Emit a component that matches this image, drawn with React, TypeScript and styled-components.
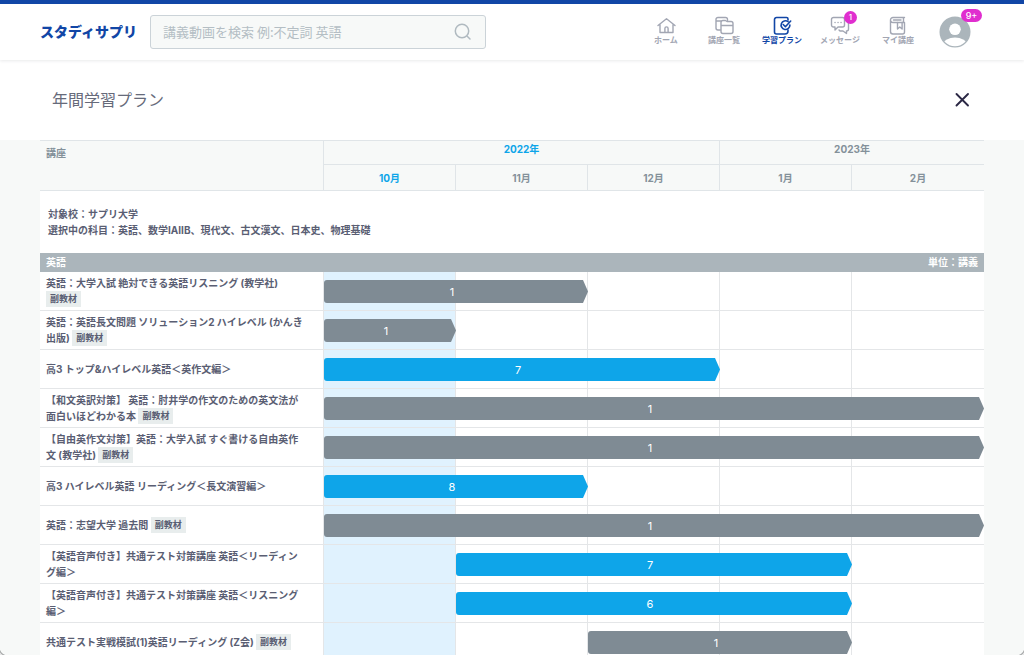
import React from 'react';
import styled, { createGlobalStyle, css } from 'styled-components';

const color = {
  brand: '#1146a6',
  sky: '#0ea5e9',
  skyPale: '#e0f2fe',
  slate: '#7f8b94',
  mist: '#abb5bb',
  canvas: '#f7f9f8',
  line: '#e0e5e8',
  grid: '#e4e6e8',
  text: '#5a5e73',
  muted: '#84919a',
  icon: '#a2a6b3',
  pink: '#e02ecf',
};

const GlobalStyle = createGlobalStyle`
  *, *::before, *::after { box-sizing: border-box; }
  body {
    margin: 0;
    background: ${color.canvas};
    color: ${color.text};
    font-family: Inter, "Noto Sans CJK JP", sans-serif;
  }
  button, input { font: inherit; }
`;

const Shell = styled.div`
  height: 100vh;
  overflow: hidden;
  display: flex;
  flex-direction: column;
`;

const WindowCorner = styled.span<{ $side: 'left' | 'right' }>`
  position: fixed;
  bottom: 0;
  ${({ $side }) => $side}: 0;
  width: 8px;
  height: 8px;
  background: radial-gradient(
    circle at ${({ $side }) => ($side === 'left' ? '100%' : '0%')} 0%,
    transparent 8px, #9b9d9e 9px, #e6e7e7 10px
  );
`;

const Header = styled.header`
  flex: none;
  display: flex;
  align-items: center;
  height: 60px;
  padding: 0 53px 0 40px;
  border-top: 4px solid ${color.brand};
  background: #fff;
  box-shadow: 0 1px 3px rgba(40, 50, 60, 0.1);
  position: relative;
  z-index: 3;
`;

const Logo = styled.a`
  flex: none;
  width: 110px;
  color: ${color.brand};
  font-size: 14px;
  font-weight: 900;
  line-height: 24px;
  white-space: nowrap;
  text-decoration: none;
`;

const SearchForm = styled.form`
  display: flex;
  align-items: center;
  flex: 0 1 336px;
  height: 34px;
  padding: 0 12px;
  border: 1px solid #cbd3d8;
  border-radius: 3px;
  background: ${color.canvas};
`;

const SearchInput = styled.input`
  flex: 1;
  min-width: 0;
  padding: 0;
  border: 0;
  outline: 0;
  background: none;
  font-family: "Noto Sans CJK JP", sans-serif;
  font-size: 13px;
  line-height: 20px;
  color: ${color.text};
  &::placeholder { color: #b4bec4; opacity: 1; }
`;

const IconButton = styled.button`
  display: flex;
  padding: 0;
  border: 0;
  background: none;
  color: inherit;
  cursor: pointer;
`;

const SearchButton = styled(IconButton)`
  color: #b0bac0;
`;

const Nav = styled.nav`
  display: flex;
  align-self: flex-start;
  margin-left: auto;
  padding-top: 12px;
`;

const NavItem = styled.a<{ $active?: boolean }>`
  position: relative;
  display: flex;
  flex-direction: column;
  align-items: center;
  width: 58px;
  color: ${({ $active }) => ($active ? color.brand : color.icon)};
  font-size: 8px;
  font-weight: 700;
  line-height: 8px;
  white-space: nowrap;
  text-decoration: none;
`;

const Strokes = styled.svg<{ $weight?: number }>`
  display: block;
  fill: none;
  stroke: currentColor;
  stroke-width: ${({ $weight = 1.4 }) => $weight};
  stroke-linecap: round;
  stroke-linejoin: round;
`;

const Badge = styled.span<{ $wide?: boolean }>`
  position: absolute;
  height: 13px;
  border-radius: 7px;
  background: ${color.pink};
  color: #fff;
  font-weight: 500;
  line-height: 13px;
  text-align: center;
  ${({ $wide }) =>
    $wide
      ? css`top: -7px; left: 22px; width: 21px; font-size: 9px;`
      : css`top: -5px; left: 33px; width: 13px; font-size: 8px;`}
`;

const Account = styled(IconButton)`
  position: relative;
  margin-left: 12px;
`;

const TitleBar = styled.div`
  flex: none;
  display: flex;
  align-items: center;
  justify-content: space-between;
  height: 80px;
  padding: 0 54px 0 52px;
  background: #fff;
`;

const Title = styled.h1`
  margin: 0;
  color: #666a7a;
  font-size: 16px;
  font-weight: 400;
  line-height: 24px;
`;

const CloseButton = styled(IconButton)`
  color: #2b2845;
`;

const Content = styled.main`
  flex: 1;
  min-height: 0;
  overflow: hidden;
  padding: 0 40px;
`;

const Schedule = styled.table`
  width: 100%;
  table-layout: fixed;
  border-collapse: separate;
  border-spacing: 0;
  background: #fff;
  font-size: 10px;
  font-weight: 700;
  line-height: 16px;
`;

const CourseCol = styled.col`
  width: 284px;
`;

const HeadCell = styled.th<{ $current?: boolean; $kind: 'course' | 'year' | 'month' }>`
  padding: 0;
  border-bottom: 1px solid ${color.line};
  background: ${color.canvas};
  color: ${({ $current }) => ($current ? color.sky : color.muted)};
  &:not(:last-child) { border-right: 1px solid ${color.line}; }
  ${({ $kind }) =>
    $kind === 'course' &&
    css`
      padding: 4px 6px;
      border-top: 1px solid ${color.line};
      border-right: 1px solid ${color.line};
      text-align: left;
      vertical-align: top;
    `}
  ${({ $kind }) =>
    $kind === 'year' &&
    css`
      height: 25px;
      border-top: 1px solid ${color.line};
      vertical-align: top;
    `}
  ${({ $kind }) => $kind === 'month' && css`height: 26px;`}
`;

const InfoCell = styled.td`
  padding: 15px 8px;
`;

const InfoLine = styled.p`
  margin: 0;
`;

const SubjectCell = styled.th<{ $end?: boolean }>`
  height: 19px;
  padding: 1px 6px 2px;
  background: ${color.mist};
  color: #fff;
  text-align: ${({ $end }) => ($end ? 'right' : 'left')};
`;

const CourseCell = styled.th`
  height: 39px;
  padding: 3px 17px 3px 6px;
  border-right: 1px solid ${color.grid};
  border-bottom: 1px solid ${color.grid};
  text-align: left;
  vertical-align: middle;
`;

const Tag = styled.span`
  display: inline-block;
  padding: 0 4px;
  background: #e8eded;
  font-size: 9px;
  line-height: 16px;
  vertical-align: top;
`;

const MonthCell = styled.td<{ $current?: boolean }>`
  position: relative;
  height: 39px;
  padding: 0;
  border-bottom: 1px solid ${color.grid};
  background: ${({ $current }) => ($current ? color.skyPale : 'transparent')};
  &:not(:last-child) { border-right: 1px solid ${color.grid}; }
`;

const Bar = styled.span<{ $months: number; $extra?: boolean }>`
  position: absolute;
  z-index: 1;
  top: 8px;
  left: 0;
  display: flex;
  align-items: center;
  justify-content: center;
  width: calc(${({ $months }) => $months * 100}% + ${({ $months }) => $months}px);
  height: 23px;
  padding-right: 8px;
  border-radius: 3px 0 0 3px;
  background: ${({ $extra }) => ($extra ? color.slate : color.sky)};
  clip-path: polygon(0 0, calc(100% - 5px) 0, 100% 50%, calc(100% - 5px) 100%, 0 100%);
  color: #fff;
  font-size: 11px;
  font-weight: 400;
`;

const HomeIcon = () => (
  <Strokes width="20" height="20" viewBox="0 0 20 20" aria-hidden="true">
    <path d="M2 9.500 10.500 2.700 19 9.500M4 8.500v8h13v-8M8.900 16.500v-4a1.600 1.600 0 0 1 3.200 0v4" />
  </Strokes>
);

const CoursesIcon = () => (
  <Strokes width="20" height="20" viewBox="0 0 20 20" aria-hidden="true">
    <path d="M6.500 14H4a2 2 0 0 1-2-2V3.500a2 2 0 0 1 2-2h7.500a2 2 0 0 1 2 2v1M2 5h5" />
    <path d="M9 4.500h2.500l1.500 1h4a2 2 0 0 1 2 2V15.500a2 2 0 0 1-2 2H9a2 2 0 0 1-2-2V6.500a2 2 0 0 1 2-2zM7 9.500h12" />
  </Strokes>
);

const PlanIcon = () => (
  <Strokes width="20" height="20" viewBox="0 0 20 20" aria-hidden="true" $weight={1.6}>
    <path d="M16 4V3a1.500 1.500 0 0 0-1.500-1.500h-10a2 2 0 0 0-2 2V16a2 2 0 0 0 2 2H13a3 3 0 0 0 3-3v-1" />
    <path d="M16 5.500A4.400 4.400 0 1 0 17.900 9M11.200 8.500l2.200 2.200L18.700 5" />
  </Strokes>
);

const MessageIcon = () => (
  <Strokes width="20" height="20" viewBox="0 0 20 20" aria-hidden="true">
    <path d="M3.500 1.500h9a2 2 0 0 1 2 2V9a2 2 0 0 1-2 2H8l-3 3v-3H3.500a2 2 0 0 1-2-2V3.500a2 2 0 0 1 2-2z" />
    <path d="M17 5.500a2 2 0 0 1 1.500 2V13a2 2 0 0 1-2 2v2.500L13 15h-3l-1-1" />
    <path d="M5 6.500h.1M8 6.500h.1M11 6.500h.1" />
  </Strokes>
);

const MyCoursesIcon = () => (
  <Strokes width="20" height="20" viewBox="0 0 20 20" aria-hidden="true">
    <path d="M16.500 1.500H5a2.500 2.500 0 0 0-2.500 2.500v11.500A2.500 2.500 0 0 0 5 18h9.500a2 2 0 0 0 2-2V6.500H5A2.500 2.500 0 0 1 2.500 4M15.500 1.500v5M5.500 4h7.500" />
    <path d="M9.500 6.500v6.500l2.300-2 2.300 2V6.500" />
  </Strokes>
);

const SearchIcon = () => (
  <Strokes width="20" height="20" viewBox="0 0 20 20" aria-hidden="true" $weight={1.5}>
    <circle cx="9" cy="9" r="6.700" />
    <path d="m14.200 14.200 2.800 2.800" />
  </Strokes>
);

const CloseIcon = () => (
  <svg width="16" height="16" viewBox="0 0 16 16" aria-hidden="true">
    <path d="M2.500 2l11.500 11.500M14 2 2.500 13.500" fill="none" stroke="currentColor" strokeWidth="1.9" strokeLinecap="round" />
  </svg>
);

const AvatarIcon = () => (
  <svg width="32" height="32" viewBox="0 0 32 32" aria-hidden="true">
    <defs>
      <clipPath id="avatar-disc"><circle cx="16" cy="16" r="14.300" /></clipPath>
    </defs>
    <circle cx="16" cy="16" r="15.500" fill="#abb5bb" />
    <g clipPath="url(#avatar-disc)" fill="#fff">
      <circle cx="16" cy="13.300" r="5.800" />
      <ellipse cx="16" cy="28" rx="11.500" ry="6.500" />
    </g>
  </svg>
);

const navItems = [
  { label: 'ホーム', icon: <HomeIcon /> },
  { label: '講座一覧', icon: <CoursesIcon /> },
  { label: '学習プラン', icon: <PlanIcon />, active: true },
  { label: 'メッセージ', icon: <MessageIcon />, count: 1 },
  { label: 'マイ講座', icon: <MyCoursesIcon /> },
];

const months = ['10月', '11月', '12月', '1月', '2月'];

interface Course {
  name: string;
  extra?: boolean;
  start: number;
  span: number;
  lessons: number;
}

const courses: Course[] = [
  { name: '英語：大学入試 絶対できる英語リスニング (教学社)', extra: true, start: 0, span: 2, lessons: 1 },
  { name: '英語：英語長文問題 ソリューション2 ハイレベル (かんき出版)', extra: true, start: 0, span: 1, lessons: 1 },
  { name: '高3 トップ&ハイレベル英語＜英作文編＞', start: 0, span: 3, lessons: 7 },
  { name: '【和文英訳対策】 英語：肘井学の作文のための英文法が面白いほどわかる本', extra: true, start: 0, span: 5, lessons: 1 },
  { name: '【自由英作文対策】英語：大学入試 すぐ書ける自由英作文 (教学社)', extra: true, start: 0, span: 5, lessons: 1 },
  { name: '高3 ハイレベル英語 リーディング＜長文演習編＞', start: 0, span: 2, lessons: 8 },
  { name: '英語：志望大学 過去問', extra: true, start: 0, span: 5, lessons: 1 },
  { name: '【英語音声付き】共通テスト対策講座 英語＜リーディング編＞', start: 1, span: 3, lessons: 7 },
  { name: '【英語音声付き】共通テスト対策講座 英語＜リスニング編＞', start: 1, span: 3, lessons: 6 },
  { name: '共通テスト実戦模試(1)英語リーディング (Z会)', extra: true, start: 2, span: 2, lessons: 1 },
];

export default function App() {
  return (
    <>
      <GlobalStyle />
      <Shell lang="ja">
        <Header>
          <Logo href="#">スタディサプリ</Logo>
          <SearchForm role="search" onSubmit={(e) => e.preventDefault()}>
            <SearchInput type="text" aria-label="講義動画を検索" placeholder="講義動画を検索 例:不定詞 英語" />
            <SearchButton type="submit" aria-label="検索"><SearchIcon /></SearchButton>
          </SearchForm>
          <Nav>
            {navItems.map((item) => (
              <NavItem key={item.label} href="#" $active={item.active}>
                {item.icon}
                {item.label}
                {item.count && <Badge>{item.count}</Badge>}
              </NavItem>
            ))}
          </Nav>
          <Account type="button" aria-label="アカウント">
            <AvatarIcon />
            <Badge $wide>9+</Badge>
          </Account>
        </Header>
        <TitleBar>
          <Title>年間学習プラン</Title>
          <CloseButton type="button" aria-label="閉じる"><CloseIcon /></CloseButton>
        </TitleBar>
        <Content>
          <Schedule>
            <colgroup>
              <CourseCol />
              {months.map((m) => <col key={m} />)}
            </colgroup>
            <thead>
              <tr>
                <HeadCell $kind="course" rowSpan={2} scope="col">講座</HeadCell>
                <HeadCell $kind="year" colSpan={3} scope="colgroup" $current>2022年</HeadCell>
                <HeadCell $kind="year" colSpan={2} scope="colgroup">2023年</HeadCell>
              </tr>
              <tr>
                {months.map((m, i) => (
                  <HeadCell key={m} $kind="month" scope="col" $current={i === 0}>{m}</HeadCell>
                ))}
              </tr>
            </thead>
            <tbody>
              <tr>
                <InfoCell colSpan={6}>
                  <InfoLine>対象校：サプリ大学</InfoLine>
                  <InfoLine>選択中の科目：英語、数学IAIIB、現代文、古文漢文、日本史、物理基礎</InfoLine>
                </InfoCell>
              </tr>
              <tr>
                <SubjectCell colSpan={4} scope="rowgroup">英語</SubjectCell>
                <SubjectCell as="td" colSpan={2} $end>単位：講義</SubjectCell>
              </tr>
              {courses.map((course) => (
                <tr key={course.name}>
                  <CourseCell scope="row">
                    {course.name} {course.extra && <Tag>副教材</Tag>}
                  </CourseCell>
                  {months.map((m, i) => (
                    <MonthCell key={m} $current={i === 0}>
                      {i === course.start && (
                        <Bar $months={course.span} $extra={course.extra}>{course.lessons}</Bar>
                      )}
                    </MonthCell>
                  ))}
                </tr>
              ))}
            </tbody>
          </Schedule>
        </Content>
        <WindowCorner $side="left" />
        <WindowCorner $side="right" />
      </Shell>
    </>
  );
}
